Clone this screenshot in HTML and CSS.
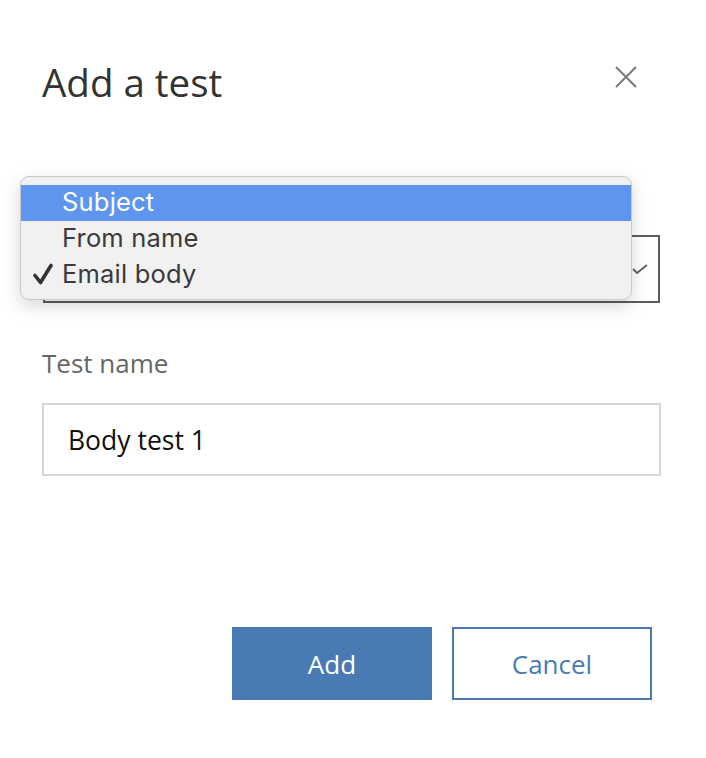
FILE: index.html
```html
<!DOCTYPE html>
<html>
<head>
<meta charset="utf-8">
<link rel="stylesheet" href="styles.css">
</head>
<body>
<div class="dialog">
  <div class="header">
    <h1 class="title">Add a test</h1>
    <svg class="close" viewBox="0 0 22 22" width="22" height="22"><path d="M1 1 L21 21 M21 1 L1 21" stroke="#7a7a7a" stroke-width="2" fill="none"/></svg>
  </div>
  <div class="select-wrap">
    <div class="select-box">
      <svg class="chev" viewBox="0 0 16 10" width="16" height="10"><path d="M1 5 L5 9 L15 1" stroke="#666" stroke-width="2" fill="none"/></svg>
    </div>
    <div class="menu">
      <div class="item active">Subject</div>
      <div class="item">From name</div>
      <div class="item"><svg class="check" viewBox="0 0 20 22" width="20" height="22"><path d="M2 12.5 L7.5 19.5 L18 2.5" stroke="#333" stroke-width="3.6" stroke-linecap="round" stroke-linejoin="round" fill="none"/></svg>Email body</div>
    </div>
  </div>
  <div class="label">Test name</div>
  <div class="input">Body test 1</div>
  <div class="footer">
    <div class="btn primary">Add</div>
    <div class="btn secondary">Cancel</div>
  </div>
</div>
</body>
</html>
```
FILE: styles.css
```css
html, body { margin: 0; padding: 0; background: #fff; }
.dialog {
  width: 706px;
  height: 758px;
  box-sizing: border-box;
  padding: 56px 45px 0 42px;
  font-family: "Open Sans", "Noto Sans", sans-serif;
}
.header {
  display: flex;
  justify-content: space-between;
  align-items: flex-start;
  height: 52px;
}
.title {
  margin: 0;
  font-weight: 400;
  font-size: 38.5px;
  line-height: 52px;
  color: #333;
}
.close { margin-top: 10px; margin-right: 24px; }
.select-wrap {
  position: relative;
  margin-top: 127px;
  margin-left: 1px;
  margin-right: 1px;
}
.select-box {
  height: 68px;
  box-sizing: border-box;
  border: 2px solid #5c5c5c;
  display: flex;
  align-items: center;
  justify-content: flex-end;
  padding-right: 10px;
}
.menu {
  position: absolute;
  left: -23px;
  top: -59px;
  width: 612px;
  height: 124px;
  box-sizing: border-box;
  padding-top: 8px;
  background: #f1f1f1;
  border: 1px solid #c9c9c9;
  border-radius: 9px;
  box-shadow: 0 6px 18px rgba(0,0,0,0.16);
  font-family: Inter, "Noto Sans", sans-serif;
  font-size: 25.5px;
  letter-spacing: 0.2px;
  color: #3a3a3a;
}
.item {
  position: relative;
  height: 36px;
  line-height: 33px;
  padding-left: 41px;
}
.item.active { background: #5d95ef; color: #fff; }
.check {
  position: absolute;
  left: 12px;
  top: 6px;
}
.label {
  margin-top: 42px;
  font-size: 26px;
  line-height: 36px;
  color: #666;
}
.input {
  margin-top: 22px;
  height: 73px;
  box-sizing: border-box;
  border: 2px solid #d6d6d6;
  padding-left: 24px;
  display: flex;
  align-items: center;
  font-size: 26.5px;
  color: #111;
}
.footer {
  display: flex;
  justify-content: flex-end;
  gap: 20px;
  margin-top: 151px;
  padding-right: 9px;
}
.btn {
  width: 200px;
  height: 73px;
  box-sizing: border-box;
  display: flex;
  align-items: center;
  justify-content: center;
  font-size: 26px;
}
.primary { background: #4a7ab4; color: #fff; }
.secondary { border: 2px solid #4a7ab4; color: #4a7ab4; background: #fff; }
```
